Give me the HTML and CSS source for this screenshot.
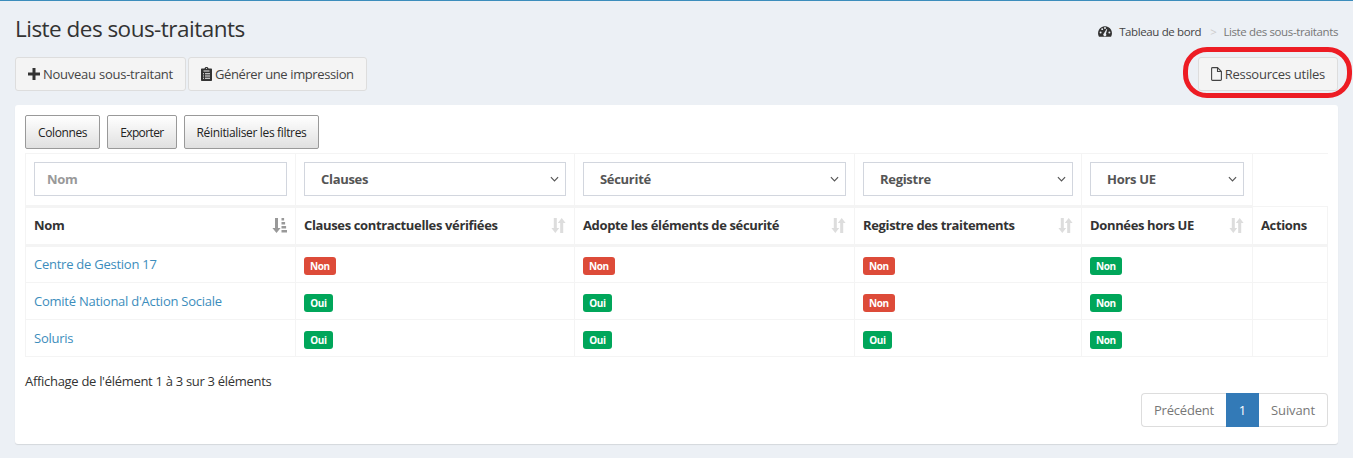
FILE: index.html
```html
<!DOCTYPE html>
<html lang="fr">
<head>
<meta charset="utf-8">
<title>Liste des sous-traitants</title>
<link rel="stylesheet" href="styles.css">
</head>
<body>
<svg class="defs" width="0" height="0" aria-hidden="true">
  <defs>
    <symbol id="sort-amount" viewBox="0 0 15 15">
      <path d="M3 0h3v10h2.600L4.500 15 .4 10H3z"/>
      <path d="M9.500 0h2.600v2.500H9.500zM9.500 4h3.600v2.500H9.500zM9.500 8h4.600v2.500H9.500zM9.500 12H15v2.500H9.500z"/>
    </symbol>
    <symbol id="sort-both" viewBox="0 0 15 15">
      <path d="M2.800 0h3v10h2.400L4.300 15 .4 10h2.400z"/>
      <path d="M9.200 15h3V5h2.400L10.700 0 6.800 5h2.400z"/>
    </symbol>
    <symbol id="chev" viewBox="0 0 10 6">
      <path d="M1 1l4 4 4-4" fill="none" stroke="currentColor" stroke-width="1.300"/>
    </symbol>
  </defs>
</svg>
<main class="page">
  <header class="head">
    <h1 class="title">Liste des sous-traitants</h1>
    <nav class="crumbs">
      <svg class="ico-gauge" viewBox="0 0 16 12"><path d="M8 0a8 8 0 0 0-6.900 12h13.800A8 8 0 0 0 8 0zM3 8.200a1.100 1.100 0 1 1 0-2.200 1.100 1.100 0 0 1 0 2.200zM4.800 4.400a1.100 1.100 0 1 1 0-2.200 1.100 1.100 0 0 1 0 2.200zM8 3a1.100 1.100 0 1 1 0-2.200 1.100 1.100 0 0 1 0 2.200zM9.600 9.600a1.800 1.800 0 1 1-2.900-1.400L9.800 3l.7.300-1.500 5.500c.3.200.6.500.6.800zM13 8.200a1.100 1.100 0 1 1 0-2.200 1.100 1.100 0 0 1 0 2.200z" fill-rule="evenodd"/></svg>
      <a class="crumb-link">Tableau de bord</a>
      <span class="crumb-sep">&gt;</span>
      <span class="crumb-cur">Liste des sous-traitants</span>
    </nav>
  </header>
  <div class="actions">
    <div class="actions-left">
      <button class="btn btn-new"><svg class="ico ico-plus" viewBox="0 0 12 12"><path d="M4.500 0h3v4.500H12v3H7.500V12h-3V7.500H0v-3h4.500z"/></svg>Nouveau sous-traitant</button>
      <button class="btn btn-print"><svg class="ico ico-clip" viewBox="0 0 11 14"><path fill-rule="evenodd" d="M3.500 1.500C3.500.7 4.400 0 5.500 0s2 .7 2 1.500H10c.6 0 1 .4 1 1V13c0 .6-.4 1-1 1H1c-.6 0-1-.4-1-1V2.500c0-.6.4-1 1-1zM5 1.300v.8h1v-.8zM2.500 3.500v1h6v-1zM2 6.200v1h1v-1zM4 6.200v1h5v-1zM2 8.500v1h1v-1zM4 8.500v1h5v-1zM2 10.800v1h1v-1zM4 10.800v1h5v-1z"/></svg>Générer une impression</button>
    </div>
    <div class="res-wrap">
      <button class="btn btn-res"><svg class="ico ico-file" viewBox="0 0 11 14"><path d="M.6 1.500C.6 1 1 .6 1.500.6h5l3.900 3.900v8c0 .5-.4.9-.9.9h-8c-.5 0-.9-.4-.9-.9zM6.500.8v3.700h3.700" fill="none" stroke="currentColor" stroke-width="1.100"/></svg>Ressources utiles</button>
      <span class="highlight"></span>
    </div>
  </div>
  <section class="box">
    <div class="tools">
      <button class="tool">Colonnes</button>
      <button class="tool tool-exp">Exporter</button>
      <button class="tool tool-reset">Réinitialiser les filtres</button>
    </div>
    <table class="grid">
      <colgroup>
        <col class="c1"><col class="c2"><col class="c2b"><col class="c3"><col class="c4"><col class="c5">
      </colgroup>
      <thead>
        <tr class="filters">
          <td><input class="field" type="text" placeholder="Nom"></td>
          <td><div class="sel"><span>Clauses</span><svg class="chev"><use href="#chev"/></svg></div></td>
          <td><div class="sel"><span>Sécurité</span><svg class="chev"><use href="#chev"/></svg></div></td>
          <td><div class="sel"><span>Registre</span><svg class="chev"><use href="#chev"/></svg></div></td>
          <td><div class="sel"><span>Hors UE</span><svg class="chev"><use href="#chev"/></svg></div></td>
          <td class="blank"></td>
        </tr>
        <tr class="heads">
          <th><div class="th"><span>Nom</span><svg class="sort on"><use href="#sort-amount"/></svg></div></th>
          <th><div class="th"><span>Clauses contractuelles vérifiées</span><svg class="sort"><use href="#sort-both"/></svg></div></th>
          <th><div class="th"><span>Adopte les éléments de sécurité</span><svg class="sort"><use href="#sort-both"/></svg></div></th>
          <th><div class="th"><span>Registre des traitements</span><svg class="sort"><use href="#sort-both"/></svg></div></th>
          <th><div class="th"><span>Données hors UE</span><svg class="sort"><use href="#sort-both"/></svg></div></th>
          <th>Actions</th>
        </tr>
      </thead>
      <tbody>
        <tr>
          <td><a class="link">Centre de Gestion 17</a></td>
          <td><span class="tag red">Non</span></td>
          <td><span class="tag red">Non</span></td>
          <td><span class="tag red">Non</span></td>
          <td><span class="tag green">Non</span></td>
          <td></td>
        </tr>
        <tr>
          <td><a class="link">Comité National d'Action Sociale</a></td>
          <td><span class="tag green">Oui</span></td>
          <td><span class="tag green">Oui</span></td>
          <td><span class="tag red">Non</span></td>
          <td><span class="tag green">Non</span></td>
          <td></td>
        </tr>
        <tr>
          <td><a class="link">Soluris</a></td>
          <td><span class="tag green">Oui</span></td>
          <td><span class="tag green">Oui</span></td>
          <td><span class="tag green">Oui</span></td>
          <td><span class="tag green">Non</span></td>
          <td></td>
        </tr>
      </tbody>
    </table>
    <p class="info">Affichage de l'élément 1 à 3 sur 3 éléments</p>
    <div class="pager">
      <a class="pg first">Précédent</a><a class="pg cur">1</a><a class="pg last">Suivant</a>
    </div>
  </section>
</main>
</body>
</html>
```

FILE: styles.css
```css
* { box-sizing: border-box; }
html, body { height: 100%; }
body {
  margin: 0;
  background: #ecf0f5;
  border-top: 1px solid #3c8dbc;
  color: #333;
  font-family: "Open Sans", "Liberation Sans", sans-serif;
  font-size: 13px;
  overflow: hidden;
}
.defs { position: absolute; }
.page { padding: 0 15px; }
.head {
  display: flex;
  justify-content: space-between;
  align-items: center;
  height: 56px;
}
.title { margin: 0; font-size: 22.5px; font-weight: 400; letter-spacing: -.52px; color: #333; position: relative; top: -1px; }
.crumbs { display: flex; align-items: center; font-size: 11.5px; letter-spacing: -.38px; position: relative; top: 2px; }
.ico-gauge { width: 14px; height: 11px; fill: #333; margin-right: 7px; }
.crumb-link { color: #444; }
.crumb-sep { color: #ccc; margin: 0 7px 0 9px; }
.crumb-cur { color: #777; }
.actions { display: flex; justify-content: space-between; height: 48px; }
.actions-left { display: flex; gap: 2px; }
.btn {
  display: flex;
  align-items: center;
  height: 34px;
  padding: 0 12px;
  background: #f4f4f4;
  border: 1px solid #ddd;
  border-radius: 3px;
  color: #444;
  font: inherit;
}
.btn-new { letter-spacing: -.25px; }
.btn-print { letter-spacing: -.39px; }
.btn-res { letter-spacing: -.25px; }
.ico { fill: #444; color: #444; margin-right: 3px; }
.ico-plus { width: 12px; height: 12px; fill: #333; }
.ico-clip { width: 11px; height: 14px; fill: #333; }
.ico-file { width: 11px; height: 14px; fill: none; }
.res-wrap { position: relative; }
.highlight {
  position: absolute;
  left: -15px;
  top: -10px;
  width: 169px;
  height: 51px;
  border: 5px solid #ed1c24;
  border-radius: 24px;
  pointer-events: none;
}
.box {
  height: 339px;
  padding: 10px;
  background: #fff;
  border-radius: 3px;
  box-shadow: 0 1px 1px rgba(0, 0, 0, .1);
}
.tools { display: flex; gap: 7px; margin-bottom: 4px; }
.tool {
  height: 34px;
  padding: 0 12px;
  border: 1px solid #999;
  border-radius: 2px;
  background: linear-gradient(#fff, #e0e0e0);
  color: #222;
  font: inherit;
  font-size: 12px;
  letter-spacing: -.38px;
}
.tool-exp { letter-spacing: -.62px; }
.tool-reset { letter-spacing: -.34px; }
.grid {
  width: 1302px;
  border-collapse: collapse;
  table-layout: fixed;
  border-top: 1px solid #f4f4f4;
}
.c1 { width: 270px; }
.c2 { width: 279px; }
.c2b { width: 280px; }
.c3 { width: 227px; }
.c4 { width: 171px; }
.c5 { width: 75px; }
.grid td, .grid th {
  padding: 8px;
  border: 1px solid #f4f4f4;
  text-align: left;
}
.filters td { height: 53px; border-top: 0; border-bottom: 3px solid #f4f4f4; vertical-align: top; }
.filters .blank { border: 0; border-left: 1px solid #f4f4f4; }
.heads th { height: 39px; padding: 7px 8px 9px; border-bottom: 3px solid #f4f4f4; font-size: 13px; font-weight: 700; color: #333; letter-spacing: -.36px; }
.th { display: flex; justify-content: space-between; align-items: center; }
.sort { width: 15px; height: 15px; fill: #ddd; flex: none; }
.sort.on { fill: #999; }
.grid tbody td { height: 37px; padding: 0 8px; vertical-align: middle; }
.grid tbody tr + tr td { padding-top: 2px; }
.field {
  display: block;
  width: 100%;
  height: 34px;
  padding: 0 12px;
  border: 1px solid #d2d6de;
  color: #555;
  font: inherit;
  font-size: 13px;
  font-weight: 700;
  letter-spacing: -.3px;
  outline: 0;
}
.field::placeholder { color: #999; opacity: 1; }
.sel {
  display: flex;
  justify-content: space-between;
  align-items: center;
  height: 34px;
  padding: 0 6px 0 16px;
  border: 1px solid #d2d6de;
  color: #555;
  font-size: 13px;
  font-weight: 700;
  letter-spacing: -.3px;
}
.chev { width: 9px; height: 6px; color: #555; }
.link { display: inline-block; margin-bottom: 2px; color: #3c8dbc; letter-spacing: -.25px; }
.tag {
  display: inline-block;
  min-width: 29px;
  height: 18px;
  margin-top: 2px;
  padding: 0 6px;
  border-radius: 3px;
  color: #fff;
  font-size: 10px;
  font-weight: 700;
  line-height: 18px;
  letter-spacing: -.4px;
  text-align: center;
  vertical-align: middle;
}
.red { background: #dd4b39; }
.green { background: #00a65a; }
.info { margin: 14px 0 0; height: 20px; line-height: 20px; font-size: 13px; letter-spacing: -.3px; color: #333; }
.pager { display: flex; justify-content: flex-end; margin-top: 2px; }
.pg {
  height: 34px;
  padding: 0 12px;
  border: 1px solid #ddd;
  line-height: 32px;
  color: #777;
  letter-spacing: -.2px;
}
.first { border-radius: 4px 0 0 4px; border-right: 0; }
.last { border-radius: 0 4px 4px 0; border-left: 0; letter-spacing: -.1px; }
.cur { width: 33px; padding: 0; text-align: center; background: #337ab7; border-color: #337ab7; color: #fff; }
```
